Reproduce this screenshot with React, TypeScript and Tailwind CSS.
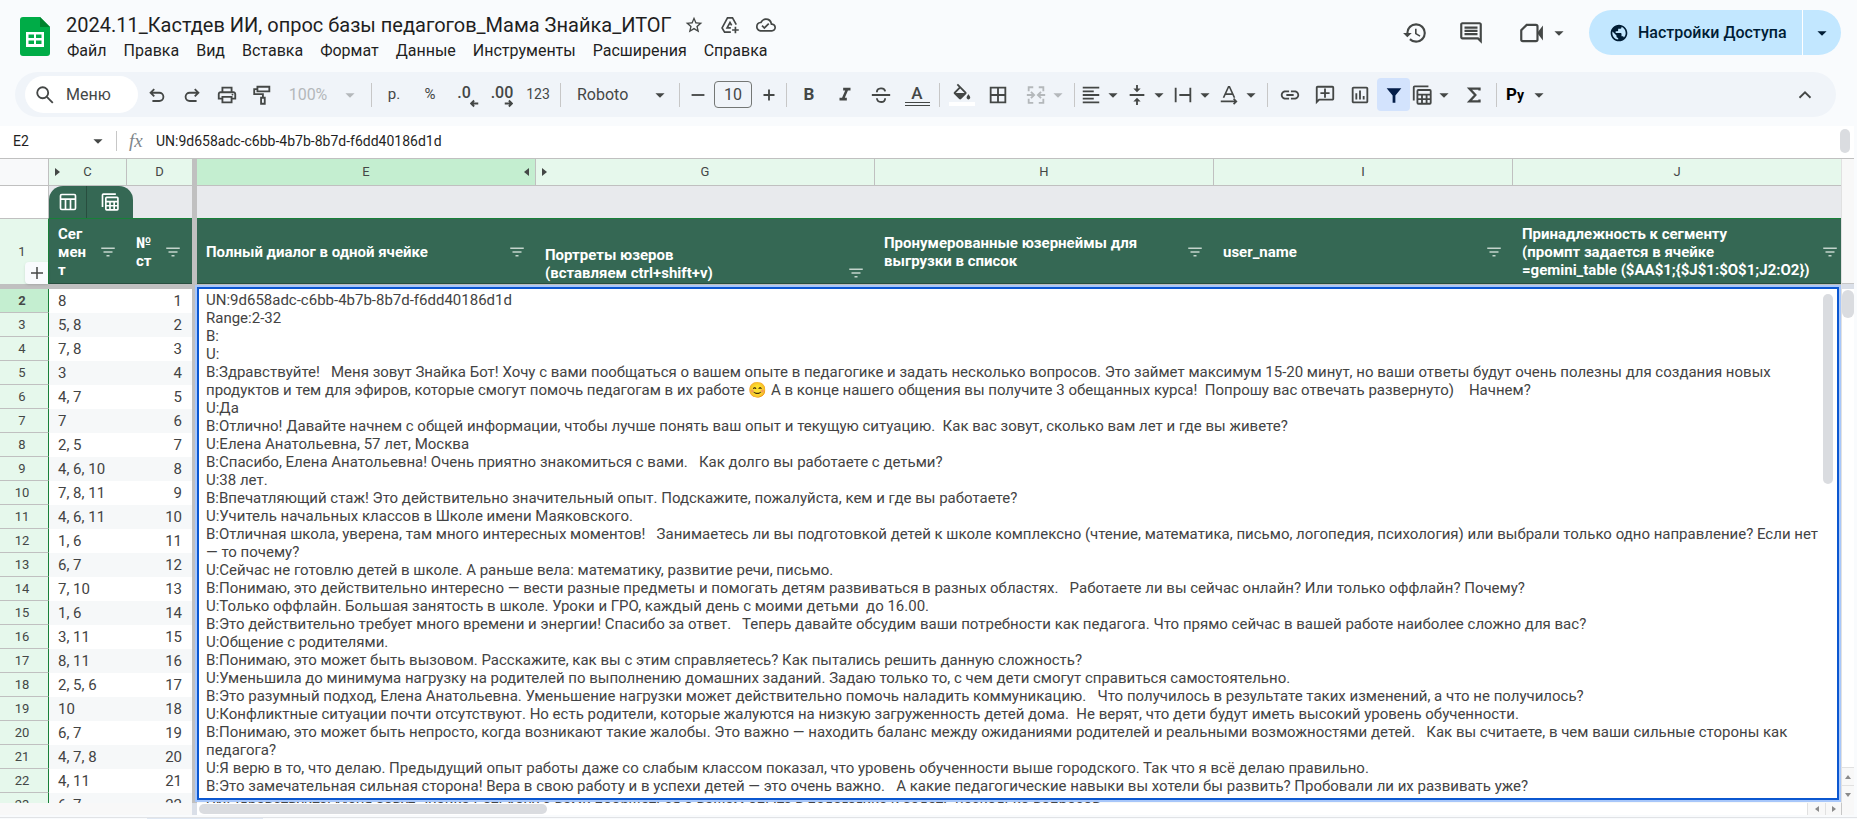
import type { ReactNode } from "react";
import { clsx } from "clsx";
import {
  MdArrowDropDown,
  MdBorderAll,
  MdFilterList,
  MdFormatColorFill,
  MdFormatItalic,
  MdHistory,
  MdInsertLink,
  MdOutlineAddComment,
  MdOutlineCloudDone,
  MdOutlineInsertChart,
  MdOutlineInsertComment,
  MdOutlinePrint,
  MdPublic,
  MdStarBorder,
  MdVerticalAlignCenter,
} from "react-icons/md";

const menus = [
  "Файл",
  "Правка",
  "Вид",
  "Вставка",
  "Формат",
  "Данные",
  "Инструменты",
  "Расширения",
  "Справка",
];

const segments = [
  "8", "5, 8", "7, 8", "3", "4, 7", "7", "2, 5", "4, 6, 10", "7, 8, 11", "4, 6, 11", "1, 6",
  "6, 7", "7, 10", "1, 6", "3, 11", "8, 11", "2, 5, 6", "10", "6, 7", "4, 7, 8", "4, 11", "6, 7",
];

const dialog = `UN:9d658adc-c6bb-4b7b-8b7d-f6dd40186d1d
Range:2-32
B:
U:
B:Здравствуйте!   Меня зовут Знайка Бот! Хочу с вами пообщаться о вашем опыте в педагогике и задать несколько вопросов. Это займет максимум 15-20 минут, но ваши ответы будут очень полезны для создания новых продуктов и тем для эфиров, которые смогут помочь педагогам в их работе 😊 А в конце нашего общения вы получите 3 обещанных курса!  Попрошу вас отвечать развернуто)    Начнем?
U:Да
B:Отлично! Давайте начнем с общей информации, чтобы лучше понять ваш опыт и текущую ситуацию.  Как вас зовут, сколько вам лет и где вы живете?
U:Елена Анатольевна, 57 лет, Москва
B:Спасибо, Елена Анатольевна! Очень приятно знакомиться с вами.   Как долго вы работаете с детьми?
U:38 лет.
B:Впечатляющий стаж! Это действительно значительный опыт. Подскажите, пожалуйста, кем и где вы работаете?
U:Учитель начальных классов в Школе имени Маяковского.
B:Отличная школа, уверена, там много интересных моментов!   Занимаетесь ли вы подготовкой детей к школе комплексно (чтение, математика, письмо, логопедия, психология) или выбрали только одно направление? Если нет — то почему?
U:Сейчас не готовлю детей в школе. А раньше вела: математику, развитие речи, письмо.
B:Понимаю, это действительно интересно — вести разные предметы и помогать детям развиваться в разных областях.   Работаете ли вы сейчас онлайн? Или только оффлайн? Почему?
U:Только оффлайн. Большая занятость в школе. Уроки и ГРО, каждый день с моими детьми  до 16.00.
B:Это действительно требует много времени и энергии! Спасибо за ответ.   Теперь давайте обсудим ваши потребности как педагога. Что прямо сейчас в вашей работе наиболее сложно для вас?
U:Общение с родителями.
B:Понимаю, это может быть вызовом. Расскажите, как вы с этим справляетесь? Как пытались решить данную сложность?
U:Уменьшила до минимума нагрузку на родителей по выполнению домашних заданий. Задаю только то, с чем дети смогут справиться самостоятельно.
B:Это разумный подход, Елена Анатольевна. Уменьшение нагрузки может действительно помочь наладить коммуникацию.   Что получилось в результате таких изменений, а что не получилось?
U:Конфликтные ситуации почти отсутствуют. Но есть родители, которые жалуются на низкую загруженность детей дома.  Не верят, что дети будут иметь высокий уровень обученности.
B:Понимаю, это может быть непросто, когда возникают такие жалобы. Это важно — находить баланс между ожиданиями родителей и реальными возможностями детей.   Как вы считаете, в чем ваши сильные стороны как педагога?
U:Я верю в то, что делаю. Предыдущий опыт работы даже со слабым классом показал, что уровень обученности выше городского. Так что я всё делаю правильно.
B:Это замечательная сильная сторона! Вера в свою работу и в успехи детей — это очень важно.   А какие педагогические навыки вы хотели бы развить? Пробовали ли их развивать уже?`;

const Line = ({ children, size = 22, className }: { children: ReactNode; size?: number; className?: string }) => (
  <svg
    width={size}
    height={size}
    viewBox="0 0 24 24"
    fill="none"
    stroke="currentColor"
    strokeWidth={2}
    className={clsx("shrink-0", className)}
  >
    {children}
  </svg>
);

const Caret = ({ className }: { className?: string }) => (
  <MdArrowDropDown className={clsx("size-[22px] shrink-0", className)} />
);

const Divider = () => <span className="mx-1 h-6 w-px shrink-0 bg-[#c7c7c7]" />;

const Tool = ({ label, className = "w-9", children }: { label: string; className?: string; children: ReactNode }) => (
  <button aria-label={label} className={clsx("flex h-8 shrink-0 items-center justify-center", className)}>
    {children}
  </button>
);

const TableIcon = ({ size = 22 }: { size?: number }) => (
  <Line size={size}>
    <path d="M3 18V3.5a1 1 0 0 1 1-1h15" />
    <rect x="7" y="6.5" width="14.500" height="15" rx="1" />
    <path d="M7 11.500h14.500M7 16.500h14.500M12 11.500v10M17 11.500v10" />
  </Line>
);

const Header = () => (
  <header className="flex h-[72px] items-start justify-between pr-4 pl-5">
    <div className="flex">
      <svg width="30" height="40" viewBox="0 0 30 40" className="mt-4">
        <path d="M3 1h17l10 10v26a3 3 0 0 1-3 3H3a3 3 0 0 1-3-3V4a3 3 0 0 1 3-3z" fill="#00ac47" />
        <path d="M20 1l10 10H20z" fill="#00832d" />
        <path d="M6 16h18v15H6zM8.500 18.500v3.500H14v-3.500zM16 18.500v3.500h5.500v-3.500zM8.500 24.500v3.500H14v-3.500zM16 24.500v3.500h5.500v-3.500z" fill="#fff" fillRule="evenodd" />
      </svg>
      <div className="pl-4 pt-[11px]">
        <div className="flex h-7 items-center">
          <h1 className="text-[20px] leading-7 whitespace-nowrap text-[#1f1f1f]">
            2024.11_Кастдев ИИ, опрос базы педагогов_Мама Знайка_ИТОГ
          </h1>
          <div className="ml-3 flex gap-4 text-[#444746]">
            <button aria-label="Пометить"><MdStarBorder className="size-5" /></button>
            <button aria-label="Добавить ярлык на Диск">
              <Line size={20}>
                <path d="M13 20.500H5.500L2.500 15.500 9 3.500h6l4.500 8" />
                <path d="M13 15.500H8.500L12 9l2 3.500M18.500 14v8M14.500 18h8" />
              </Line>
            </button>
            <button aria-label="Статус документа"><MdOutlineCloudDone className="size-5" /></button>
          </div>
        </div>
        <nav className="flex h-6 items-center gap-[17px] pl-px text-[16px] text-[#1f1f1f]">
          {menus.map((m) => (
            <button key={m}>{m}</button>
          ))}
        </nav>
      </div>
    </div>

    <div className="flex items-center pt-[10px] text-[#444746]">
      <button aria-label="История версий" className="mr-[30px]"><MdHistory className="size-[26px]" /></button>
      <button aria-label="Комментарии" className="mr-[34px]"><MdOutlineInsertComment className="size-[26px]" /></button>
      <button aria-label="Видеовстреча" className="mr-[19px] flex items-center gap-1">
        <Line size={26}>
          <path d="M8 4.500h8.500a1.500 1.500 0 0 1 1.500 1.500v12a1.500 1.500 0 0 1-1.500 1.500H4.500A1.500 1.500 0 0 1 3 18V9.500z" />
          <path d="M19 12l3-4v8z" fill="currentColor" />
        </Line>
        <Caret />
      </button>
      <div className="flex h-[45px] overflow-hidden rounded-full bg-[#c2e7ff] font-medium text-[#001d35]">
        <button className="flex w-[213px] items-center gap-[9px] pl-5 text-[16px] whitespace-nowrap">
          <MdPublic className="size-5" />
          Настройки Доступа
        </button>
        <button aria-label="Быстрые действия" className="w-[39px] border-l border-white pl-2">
          <Caret />
        </button>
      </div>
    </div>
  </header>
);

const Toolbar = () => (
  <div className="mr-[21px] ml-[15px] flex h-[45px] items-center rounded-full bg-[#f0f4f9] pr-5 pl-[10px] text-[15px] text-[#444746]">
    <button className="mr-px flex h-[37px] w-[113px] shrink-0 items-center gap-[10px] rounded-full bg-white pl-[9px] text-[16px]">
      <Line size={22}>
        <circle cx="9.500" cy="9.500" r="6" />
        <path d="M14 14l6.500 6.500" />
      </Line>
      Меню
    </button>
    <Tool label="Отменить" className="w-[35px]">
      <Line><path d="M9 5.500L5 9.500l4 4M5 9.500h9.500a4.500 4.500 0 0 1 0 9H7" /></Line>
    </Tool>
    <Tool label="Повторить" className="w-[35px]">
      <Line><path d="M15 5.500l4 4-4 4M19 9.500H9.500a4.500 4.500 0 0 0 0 9H17" /></Line>
    </Tool>
    <Tool label="Печать" className="w-[35px]"><MdOutlinePrint className="size-[22px]" /></Tool>
    <Tool label="Копировать форматирование" className="w-[35px]">
      <Line>
        <path d="M7 3h13v5H7zM7 5.500H3.500V11H13v4M11 15h4v6.500h-4z" />
      </Line>
    </Tool>
    <Tool label="Масштаб" className="w-[88px] gap-3 pl-1 text-[16px] text-[#b4b8bb]">
      100% <Caret />
    </Tool>
    <Divider />
    <Tool label="Денежный формат">р.</Tool>
    <Tool label="Процентный формат">%</Tool>
    <Tool label="Уменьшить число знаков">
      <span className="relative pr-1 pb-1 text-[16px] leading-5 font-medium">
        .0
        <Line size={9} className="absolute -right-1 -bottom-px"><path d="M22 12H4M11 4l-8 8 8 8" strokeWidth={5} /></Line>
      </span>
    </Tool>
    <Tool label="Увеличить число знаков">
      <span className="relative pb-1 text-[16px] leading-5 font-medium">
        .00
        <Line size={9} className="absolute right-0 -bottom-px"><path d="M2 12h18M13 4l8 8-8 8" strokeWidth={5} /></Line>
      </span>
    </Tool>
    <Tool label="Другие форматы"><span className="text-[14px]">123</span></Tool>
    <Divider />
    <Tool label="Шрифт" className="w-[110px] pr-1 pl-3 text-[16px]">
      Roboto <Caret className="ml-auto" />
    </Tool>
    <Divider />
    <Tool label="Уменьшить размер" className="w-[27px]"><Line><path d="M5 12h14" /></Line></Tool>
    <input
      aria-label="Размер шрифта"
      defaultValue="10"
      className="mx-[3px] h-[27px] w-[38px] shrink-0 rounded border border-[#747775] text-center text-[16px]"
    />
    <Tool label="Увеличить размер" className="w-[27px]"><Line><path d="M6 12h12M12 6v12" /></Line></Tool>
    <Divider />
    <Tool label="Полужирный"><b className="text-[17px]">B</b></Tool>
    <Tool label="Курсив"><MdFormatItalic className="size-[22px]" /></Tool>
    <Tool label="Зачеркнутый">
      <Line>
        <path d="M2 12h20M7.500 9C7.500 3.500 16 3.500 16.500 8M7.500 15.500c.5 5.500 9 5.500 9 0" />
      </Line>
    </Tool>
    <Tool label="Цвет текста">
      <span className="flex w-[25px] flex-col items-center">
        <span className="text-[17px] leading-[18px] font-medium">A</span>
        <span className="h-1 w-full border-y border-[#444746]" />
      </span>
    </Tool>
    <Divider />
    <Tool label="Цвет заливки">
      <span className="flex w-[26px] flex-col items-center">
        <MdFormatColorFill className="h-[19px] w-[22px]" viewBox="0 0 24 19" />
        <span className="h-1 w-full bg-white" />
      </span>
    </Tool>
    <Tool label="Границы"><MdBorderAll className="size-[22px]" /></Tool>
    <Tool label="Объединить ячейки" className="w-[54px] pl-2 text-[#b4b8bb]">
      <Line>
        <path d="M9 3.500H4V8M15 3.500h5V8M9 20.500H4V16M15 20.500h5V16M2 12h7M22 12h-7M6.500 8.500L10 12l-3.500 3.500M17.500 8.500L14 12l3.500 3.500" />
      </Line>
      <Caret />
    </Tool>
    <Divider />
    <Tool label="Выровнять по горизонтали" className="w-[46px]">
      <Line><path d="M3 4h18M3 8h12M3 12h18M3 16h12M3 20h18" /></Line>
      <Caret />
    </Tool>
    <Tool label="Выровнять по вертикали" className="w-[46px]">
      <MdVerticalAlignCenter className="size-[22px]" />
      <Caret />
    </Tool>
    <Tool label="Перенос текста" className="w-[46px]">
      <Line><path d="M4 4v16M20 4v16M8 12h12" /></Line>
      <Caret />
    </Tool>
    <Tool label="Поворот текста" className="w-[46px]">
      <Line><path d="M6 15L11.500 3h1L18 15M8 11h8M3 19h17M17 16l3 3-3 3" strokeWidth={1.8} /></Line>
      <Caret />
    </Tool>
    <Divider />
    <Tool label="Вставить ссылку" className="w-[35px]"><MdInsertLink className="size-[22px]" /></Tool>
    <Tool label="Вставить комментарий" className="w-[35px]"><MdOutlineAddComment className="size-[22px] -scale-x-100" /></Tool>
    <Tool label="Вставить диаграмму" className="w-[35px]"><MdOutlineInsertChart className="size-[22px]" /></Tool>
    <button aria-label="Создать фильтр" className="flex h-[33px] w-[33px] shrink-0 items-center justify-center rounded bg-[#d3e3fd] text-[#041e49]">
      <svg width="22" height="22" viewBox="0 0 24 24" fill="currentColor">
        <path d="M4 4.500h16L13.500 12.500V20.500h-3V12.500z" />
      </svg>
    </button>
    <Tool label="Представления таблицы" className="w-[46px]"><TableIcon /><Caret /></Tool>
    <Tool label="Функции">
      <Line><path d="M18 7V5H7l6.500 7L7 19h11v-2" strokeWidth={2.5} /></Line>
    </Tool>
    <Divider />
    <Tool label="Python" className="w-[54px] text-black">
      <span className="text-[17px] font-bold">P<span className="text-[14px]">y</span></span>
      <Caret className="ml-1 text-[#444746]" />
    </Tool>
    <Tool label="Скрыть меню" className="ml-auto w-[22px]">
      <Line><path d="M6 15l6-6 6 6" /></Line>
    </Tool>
  </div>
);

const FormulaBar = () => (
  <div className="mt-[9px] mr-[3px] flex h-[33px] items-center border-b border-[#c0c0c0] bg-white pr-1 pb-[2px] pl-[13px] text-[14px] text-[#1f1f1f]">
    <input aria-label="Поле имени" defaultValue="E2" className="w-[74px]" />
    <Caret className="text-[#444746]" />
    <span className="ml-[7px] h-5 w-px bg-[#c7c7c7]" />
    <span className="ml-3 w-[27px] font-['Liberation_Serif',serif] text-[19px] leading-6 text-[#80868b] italic">fx</span>
    <input
      aria-label="Строка формул"
      defaultValue="UN:9d658adc-c6bb-4b7b-8b7d-f6dd40186d1d"
      className="flex-1"
    />
    <span className="h-6 w-[10px] rounded-full bg-[#dadce0]" />
  </div>
);

const Mark = ({ left }: { left?: boolean }) => (
  <svg width="5" height="8" viewBox="0 0 5 8" className={clsx("fill-[#444746]", left && "rotate-180")}>
    <path d="M0 0l5 4-5 4z" />
  </svg>
);

const columns = [
  { id: "C", title: "Сегмент", start: true },
  { id: "D", title: "№ ст" },
  { id: "bar" },
  { id: "E", title: "Полный диалог в одной ячейке", active: true, end: true },
  { id: "G", title: "Портреты юзеров\n(вставляем ctrl+shift+v)", start: true, bottom: true },
  { id: "H", title: "Пронумерованные юзернеймы для\nвыгрузки в список" },
  { id: "I", title: "user_name" },
  { id: "J", title: "Принадлежность к сегменту\n(промпт задается в ячейке\n=gemini_table ($AA$1;{$J$1:$O$1;J2:O2})" },
];

const Grid = () => (
  <table className="w-full table-fixed border-separate border-spacing-0 text-[15px] text-[#434343]">
    <colgroup>
      <col className="w-[49px]" />
      <col className="w-[78px]" />
      <col className="w-[65px]" />
      <col className="w-[5px]" />
      <col className="w-[339px]" />
      <col className="w-[339px]" />
      <col className="w-[339px]" />
      <col className="w-[299px]" />
      <col />
    </colgroup>
    <thead>
      <tr className="h-[27px] text-[13px] text-[#444746]">
        <th className="border-r border-b border-[#c0c0c0] bg-[#f8f9fa] p-0" />
        {columns.map((c) =>
          c.id === "bar" ? (
            <th key={c.id} className="bg-[#c0c0c0] p-0" />
          ) : (
            <th
              key={c.id}
              className={clsx(
                "border-b border-[#c0c0c0] p-0 font-normal",
                c.active ? "bg-[#c4eed0]" : "bg-[#e6f8ec]",
                c.id !== "D" && c.id !== "J" && "border-r",
              )}
            >
              <div className="flex items-center justify-between px-[6px]">
                <span className="w-[5px]">{c.start && <Mark />}</span>
                {c.id}
                <span className="w-[5px]">{c.end && <Mark left />}</span>
              </div>
            </th>
          ),
        )}
      </tr>
      <tr className="h-8 bg-[#e8eaed]">
        <th className="border-r border-[#c0c0c0] bg-white p-0" />
        <th colSpan={2} className="p-0 align-bottom">
          <div className="flex h-8 w-[84px] rounded-t-[14px] bg-[#356854] text-white">
            <button aria-label="Таблица" className="flex w-[38px] items-center justify-center border-r border-[#284e3f]">
              <Line size={20}>
                <rect x="3" y="3" width="18" height="18" rx="1.500" />
                <path d="M3 8.500h18M9 8.500V21M15 8.500V21" />
              </Line>
            </button>
            <button aria-label="Представления" className="flex flex-1 items-center justify-center">
              <TableIcon size={20} />
            </button>
          </div>
        </th>
        <th className="bg-[#c0c0c0] p-0" />
        <th colSpan={5} className="p-0" />
      </tr>
      <tr className="h-[66px]">
        <th className="relative border-t border-r border-t-[#c0c0c0] border-r-[#188038] bg-[#e6f8ec] p-0 text-[13px] font-normal text-[#444746]">
          <span className="pr-1">1</span>
          <button aria-label="Развернуть" className="absolute right-0 bottom-0 flex h-[22px] w-[23px] items-center justify-center rounded-tl rounded-bl bg-[#f9fbfd] shadow">
            <Line size={18}><path d="M4 12h16M12 4v16" /></Line>
          </button>
        </th>
        {columns.map((c) =>
          c.id === "bar" ? (
            <th key={c.id} className="bg-[#c0c0c0] p-0" />
          ) : (
            <th
              key={c.id}
              className="border-t border-b border-t-[#188038] border-b-[#284e3f] bg-[#356854] p-0 text-left leading-[18px] font-bold text-white"
            >
              <div
                className={clsx(
                  "flex h-16 justify-between pl-[9px]",
                  c.bottom ? "items-end pb-px" : "items-center pt-[2px]",
                  c.id === "J" ? "pr-[2px]" : "pr-[10px]",
                )}
              >
                <span
                  className={clsx(
                    c.id === "C" && "w-[30px] break-all",
                    c.id === "D" && "w-5",
                    c.id !== "C" && c.id !== "D" && "whitespace-pre",
                  )}
                >
                  {c.title}
                </span>
                <button aria-label="Фильтр" className="text-[#c4d4cc]"><MdFilterList className="size-[18px]" /></button>
              </div>
            </th>
          ),
        )}
      </tr>
      <tr className="h-[5px]">
        <th colSpan={9} className="bg-[#c0c0c0] p-0" />
      </tr>
    </thead>
    <tbody>
      {segments.map((s, i) => (
        <tr key={i} className={clsx("h-6 leading-5", i % 2 === 0 ? "bg-white" : "bg-[#f6f8f9]")}>
          <th
            className={clsx(
              "border-r border-b border-r-[#188038] border-b-[#c0c0c0] p-0 pr-1 text-[13px] text-[#444746]",
              i === 0 ? "bg-[#c4eed0] font-bold" : "bg-[#e6f8ec] font-normal",
            )}
          >
            {i + 2}
          </th>
          <td className="p-0 pl-[9px]">{s}</td>
          <td className="p-0 pr-[10px] text-right">{i + 1}</td>
          <td className="bg-[#c0c0c0] p-0" />
          <td colSpan={5} className="overflow-hidden p-0 pl-[9px] whitespace-nowrap">
            {i === segments.length - 1 && "UN:Здравствуйте! Меня зовут Знайка Бот! Хочу с вами пообщаться о вашем опыте в педагогике и задать несколько вопросов"}
          </td>
        </tr>
      ))}
    </tbody>
  </table>
);

const Arrow = ({ d }: { d: string }) => (
  <svg width="8" height="8" viewBox="0 0 8 8" className="fill-[#8a8a8a]">
    <path d={d} />
  </svg>
);

const Sheet = () => (
  <main className="mr-[3px] flex min-h-0 flex-1">
    <div className="relative min-w-0 flex-1 overflow-hidden bg-white">
      <Grid />
      {/* open cell editor lies over the cells */}
      <div className="absolute top-[126px] right-0 bottom-px left-[195px] border-2 border-[#a8c7fa]">
        <div className="flex h-full border-2 border-[#0b57d0] bg-white pt-[2px] pr-1 pl-[7px]">
          <textarea
            aria-label="Содержимое ячейки"
            defaultValue={dialog}
            className="h-full flex-1 resize-none overflow-hidden text-[15px] leading-[normal] text-[#434343] outline-none"
          />
          <span className="mt-[3px] h-[190px] w-[10px] rounded-full bg-[#dadce0]" />
        </div>
      </div>
    </div>
    <div className="flex w-[13px] flex-col border-l border-[#e1e1e1] bg-white">
      <span className="h-[124px] bg-[#f8f8f8]" />
      <span className="h-[6px] border-t border-[#c7c7c7] bg-[#dadfe8]" />
      <span className="mt-px h-7 rounded-full bg-[#dadce0]" />
      <button aria-label="Вверх" className="mt-auto flex h-[18px] items-center justify-center border-t border-[#e1e1e1] bg-[#f8f8f8]"><Arrow d="M1 6l3-4 3 4z" /></button>
      <button aria-label="Вниз" className="flex h-[18px] items-center justify-center border-t border-[#e1e1e1] bg-[#f8f8f8]"><Arrow d="M1 2l3 4 3-4z" /></button>
    </div>
  </main>
);

const BottomBar = () => (
  <footer className="h-4 shrink-0 bg-[#f9fbfd]">
    <div className="mr-[3px] flex h-3 bg-white">
      <span className="w-48 bg-[#f8f8f8]" />
      <span className="w-[5px] bg-[#dadfe8]" />
      <span className="mt-px ml-[2px] h-[10px] w-[348px] rounded-full bg-[#dadce0]" />
      <button aria-label="Влево" className="ml-auto flex w-[18px] items-center justify-center border-l border-[#e1e1e1] bg-[#f8f8f8]"><Arrow d="M6 1L2 4l4 3z" /></button>
      <button aria-label="Вправо" className="flex w-4 items-center justify-center border-l border-[#e1e1e1] bg-[#f8f8f8]"><Arrow d="M2 1l4 3-4 3z" /></button>
      <span className="w-[13px] border-l border-[#c7c7c7] bg-[#f8f8f8]" />
    </div>
    <div className="mt-[2px] h-px bg-[#e1e3e6]" />
    <div className="ml-[147px] h-px w-[116px] bg-[#dfe7f2]" />
  </footer>
);

export default function App() {
  return (
    <div className="flex h-screen flex-col overflow-hidden bg-[#f9fbfd] font-[Roboto,'Noto_Sans',sans-serif]">
      <Header />
      <Toolbar />
      <FormulaBar />
      <Sheet />
      <BottomBar />
    </div>
  );
}
